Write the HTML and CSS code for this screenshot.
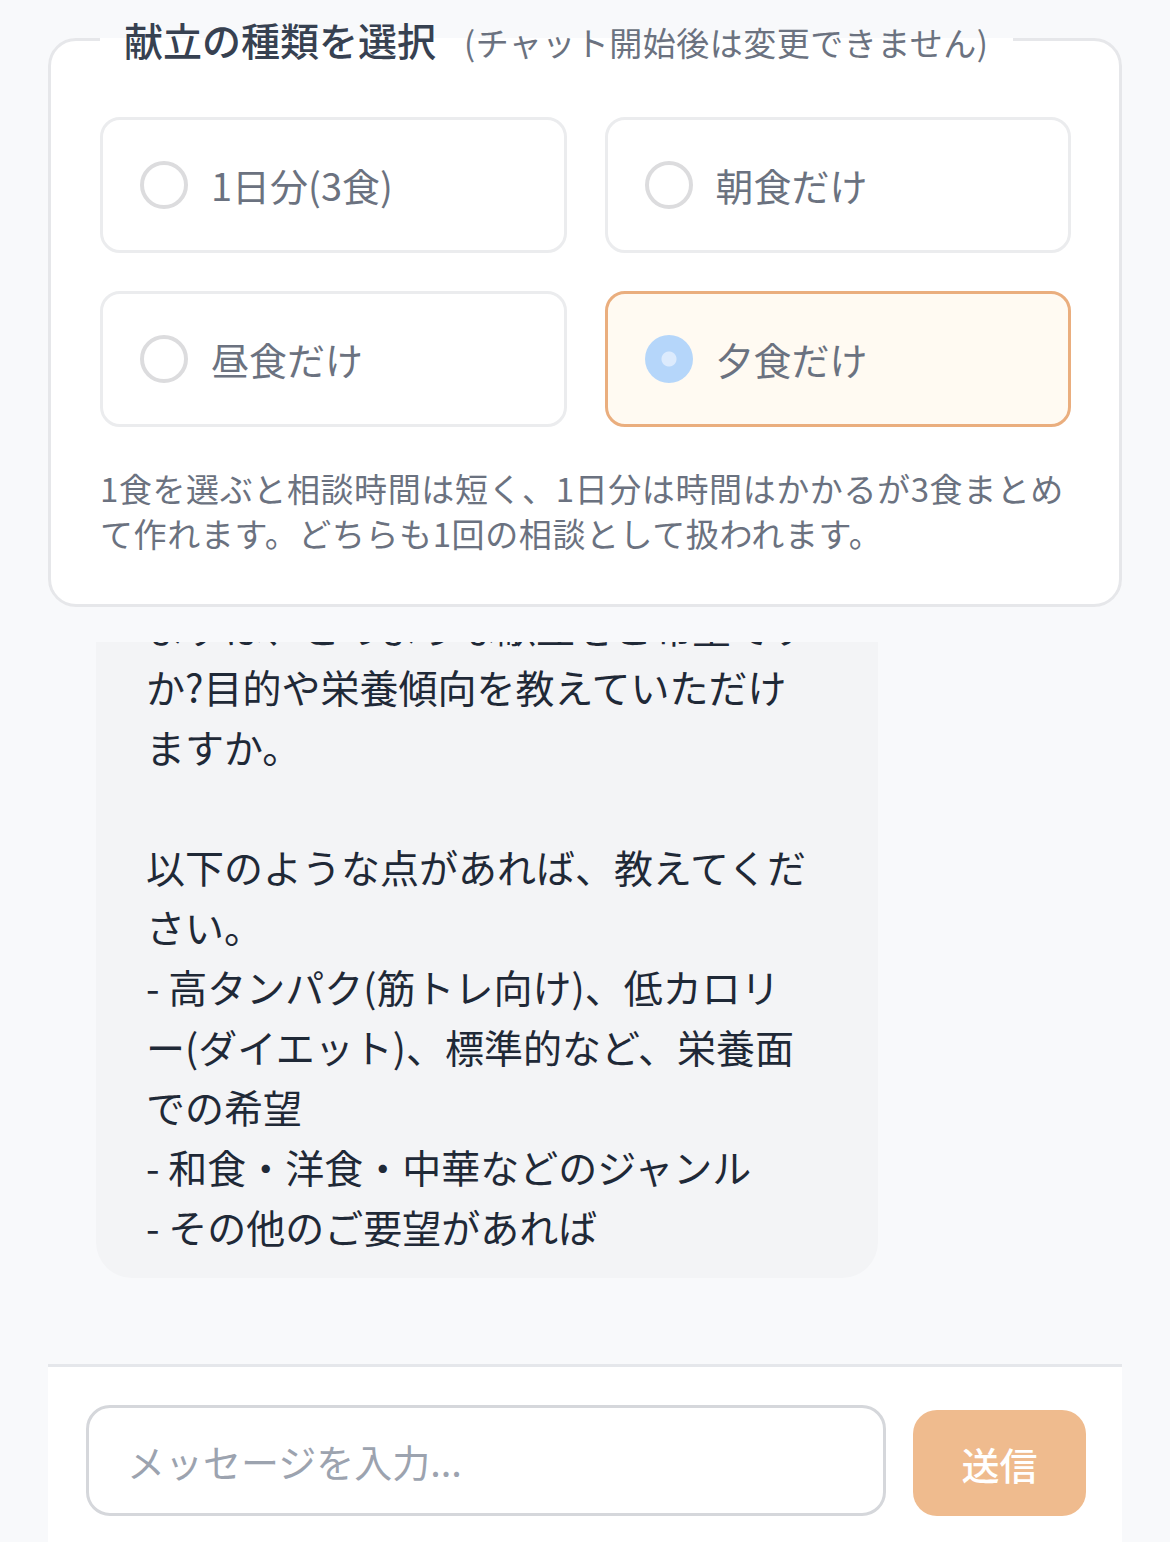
FILE: index.html
```html
<!DOCTYPE html>
<html lang="ja">
<head>
<meta charset="utf-8">
<title>献立チャット</title>
<link rel="stylesheet" href="styles.css">
</head>
<body>
<div class="app">
  <fieldset class="selector">
    <legend class="selector-legend"><span class="legend-title">献立の種類を選択</span><span class="legend-note">(チャット開始後は変更できません)</span></legend>
    <div class="options">
      <label class="option">
        <input class="radio" type="radio" name="meal" value="day">
        <span class="option-label">1日分(3食)</span>
      </label>
      <label class="option">
        <input class="radio" type="radio" name="meal" value="breakfast">
        <span class="option-label">朝食だけ</span>
      </label>
      <label class="option">
        <input class="radio" type="radio" name="meal" value="lunch">
        <span class="option-label">昼食だけ</span>
      </label>
      <label class="option option-selected">
        <input class="radio" type="radio" name="meal" value="dinner" checked>
        <span class="option-label">夕食だけ</span>
      </label>
    </div>
    <p class="selector-help">1食を選ぶと相談時間は短く、1日分は時間はかかるが3食まとめて作れます。どちらも1回の相談として扱われます。</p>
  </fieldset>

  <div class="chat">
    <div class="bubble">
      <p class="bubble-text">まずは、どのような献立をご希望です<br>か?目的や栄養傾向を教えていただけ<br>ますか。<br><br>以下のような点があれば、教えてくだ<br>さい。<br>- 高タンパク(筋トレ向け)、低カロリ<br>ー(ダイエット)、標準的など、栄養面<br>での希望<br>- 和食・洋食・中華などのジャンル<br>- その他のご要望があれば</p>
    </div>
  </div>

  <div class="composer">
    <input class="composer-input" type="text" placeholder="メッセージを入力...">
    <button class="composer-send" type="button">送信</button>
  </div>
</div>
</body>
</html>
```

FILE: styles.css
```css
* {
  box-sizing: border-box;
}

html, body {
  margin: 0;
  padding: 0;
}

body {
  background: #f8f9fb;
  font-family: "Noto Sans CJK JP", "Noto Sans", sans-serif;
  color: #1f2937;
}

.app {
  width: 1074px;
  height: 1542px;
  margin: 0 auto;
  padding-top: 12px;
  display: flex;
  flex-direction: column;
  overflow: hidden;
}

.selector {
  margin: 0;
  padding: 51px 48px 48px 49px;
  background: #ffffff;
  border: 3px solid #e6e7ea;
  border-radius: 28px;
  flex: 0 0 auto;
}

.selector-legend {
  padding: 0 24px;
  height: 54px;
  line-height: 54px;
  white-space: nowrap;
}

.legend-title {
  font-size: 39px;
  font-weight: 500;
  color: #374151;
}

.legend-note {
  font-size: 33px;
  color: #6b7280;
  margin-left: 28px;
  letter-spacing: 0.5px;
}

.options {
  display: grid;
  grid-template-columns: 1fr 1fr;
  gap: 38px;
}

.option {
  height: 136px;
  display: flex;
  align-items: center;
  padding-left: 37px;
  border: 3px solid #ebecee;
  border-radius: 20px;
  background: #ffffff;
  cursor: pointer;
}

.option-selected {
  border-color: #eaae7e;
  background: #fffaf2;
}

.radio {
  appearance: none;
  -webkit-appearance: none;
  margin: 0;
  width: 48px;
  height: 48px;
  border-radius: 50%;
  border: 4px solid #dcdcde;
  background: #ffffff;
  flex: 0 0 auto;
}

.radio:checked {
  border: none;
  background: radial-gradient(circle, #dcebfd 0 7px, #b5d6fa 8px);
}

.option-label {
  margin-left: 23px;
  font-size: 38px;
  color: #6b7280;
  line-height: 1;
}

.selector-help {
  margin: 39px 0 0 0;
  font-size: 33px;
  letter-spacing: 0.6px;
  line-height: 45px;
  color: #6b7280;
}

.chat {
  flex: 1 1 auto;
  margin-top: 35px;
  overflow: hidden;
  display: flex;
  flex-direction: column;
  justify-content: flex-end;
  padding: 0 0 86px 48px;
}

.bubble {
  width: 782px;
  flex: 0 0 auto;
  background: #f3f4f6;
  border-radius: 36px;
  padding: 22px 50px 22px 50px;
}

.bubble-text {
  margin: 0;
  font-size: 39px;
  line-height: 60px;
  color: #1f2937;
  white-space: nowrap;
}

.composer {
  flex: 0 0 auto;
  height: 178px;
  background: #ffffff;
  border-top: 3px solid #e5e7eb;
  display: flex;
  align-items: flex-start;
  padding: 38px 36px 0 38px;
  gap: 27px;
}

.composer-input {
  flex: 1 1 auto;
  height: 111px;
  border: 3px solid #d5d7db;
  border-radius: 24px;
  padding: 0 38px;
  font-family: "Noto Sans CJK JP", "Noto Sans", sans-serif;
  font-size: 38px;
  color: #1f2937;
  background: #ffffff;
  outline: none;
}

.composer-input::placeholder {
  color: #9ca3af;
}

.composer-send {
  flex: 0 0 173px;
  height: 106px;
  margin-top: 5px;
  border: none;
  border-radius: 24px;
  background: #efbb8e;
  color: #ffffff;
  font-family: "Noto Sans CJK JP", "Noto Sans", sans-serif;
  font-size: 38px;
  font-weight: 500;
}
```
